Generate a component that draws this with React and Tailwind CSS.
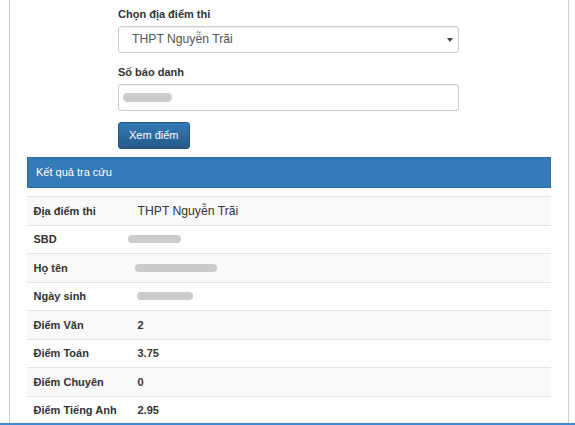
import React from 'react';

const rows = [
    { label: 'Địa điểm thi', value: 'THPT Nguyễn Trãi', bold: false },
    { label: 'SBD', blur: { w: 53, ml: -10 } },
    { label: 'Họ tên', blur: { w: 82, ml: -3 } },
    { label: 'Ngày sinh', blur: { w: 56, ml: -1 } },
    { label: 'Điểm Văn', value: '2', bold: true },
    { label: 'Điểm Toán', value: '3.75', bold: true },
    { label: 'Điểm Chuyên', value: '0', bold: true },
    { label: 'Điểm Tiếng Anh', value: '2.95', bold: true },
];

const Blob = ({ w, ml }) => (
    <div
        className="h-[8px] rounded-full bg-[#cbcbcb] blur-[0.6px]"
        style={{ width: w, marginLeft: ml }}
    />
);

const App = () => {
    return (
        <div className="w-[575px] h-[425px] overflow-hidden bg-white text-[#333] text-[11px] font-['Liberation_Sans',Arial,sans-serif]">
            <div className="ml-[9px] w-[560px] h-[423px] border-x border-[#cfcfcf]">
                {/* search form */}
                <div className="ml-[108px] w-[341px] pt-[6px]">
                    <label className="block font-bold leading-[16px] mb-[4px]">Chọn địa điểm thi</label>
                    <div className="h-[27px] mb-[11px] flex items-center justify-between border border-[#ccc] rounded-[3px] shadow-[inset_0_1px_1px_rgba(0,0,0,0.075)] pl-[13px] pr-[5px] text-[#555] text-[12.2px]">
                        <span>THPT Nguyễn Trãi</span>
                        <svg width="6" height="4" viewBox="0 0 6 4">
                            <path d="M0 0h6L3 4z" fill="#444" />
                        </svg>
                    </div>

                    <label className="block font-bold leading-[16px] mb-[4px]">Số báo danh</label>
                    <div className="h-[27px] mb-[11px] flex items-center border border-[#ccc] rounded-[3px] shadow-[inset_0_1px_1px_rgba(0,0,0,0.075)] pl-[4px]">
                        <div className="h-[9px] w-[49px] rounded-full bg-[#cbcbcb] blur-[0.6px]" />
                    </div>

                    <button className="h-[27px] px-[10px] rounded-[3px] border border-[#245580] bg-gradient-to-b from-[#337ab7] to-[#265a88] text-white leading-none">
                        Xem điểm
                    </button>
                </div>

                {/* results panel */}
                <div className="mx-[17px] mt-[8px]">
                    <div className="h-[31px] flex items-center px-[8px] bg-[#337ab7] border border-[#2e6da4] text-white">
                        Kết quả tra cứu
                    </div>
                    <div className="mt-[8px]">
                        {rows.map((row, i) => (
                            <div
                                key={row.label}
                                className={`h-[28.5px] flex items-center border-t border-[#e4e4e4] ${i % 2 === 0 ? 'bg-[#f9f9f9]' : 'bg-white'}`}
                            >
                                <div className="w-[104px] pl-[6.5px] font-bold">{row.label}</div>
                                <div className={`pl-[6.5px] ${row.bold ? 'font-bold' : 'text-[12.2px]'}`}>
                                    {row.blur ? <Blob w={row.blur.w} ml={row.blur.ml} /> : row.value}
                                </div>
                            </div>
                        ))}
                    </div>
                </div>
            </div>
            <div className="h-[2px] bg-[#3a8ad8]" />
        </div>
    );
};

export default App;
